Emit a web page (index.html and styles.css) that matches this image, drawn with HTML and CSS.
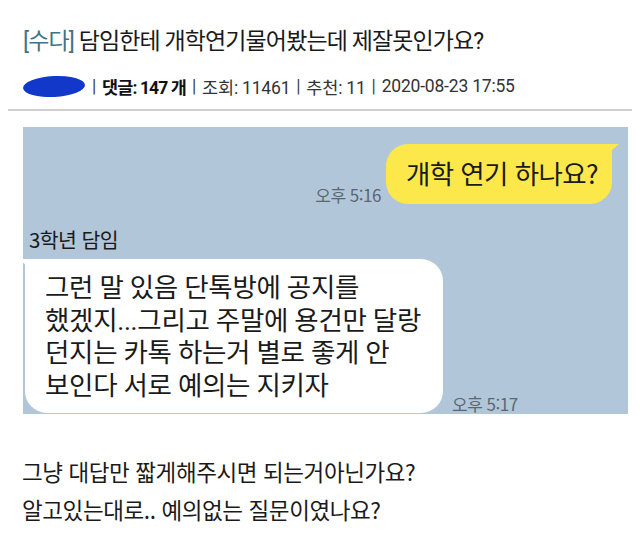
FILE: index.html
```html
<!DOCTYPE html>
<html lang="ko">
<head>
<meta charset="utf-8">
<link rel="stylesheet" href="styles.css">
</head>
<body>
<div class="page">
  <h1 class="title"><span class="tag">[수다]</span> 담임한테 개학연기물어봤는데 제잘못인가요?</h1>
  <div class="meta">
    <span class="blob"></span>
    <span class="sep">|</span>
    <span class="strong">댓글: 147 개</span>
    <span class="sep">|</span>
    <span>조회: 11461</span>
    <span class="sep">|</span>
    <span>추천: 11</span>
    <span class="sep">|</span>
    <span>2020-08-23 17:55</span>
  </div>
  <div class="divider"></div>
  <div class="chat">
    <div class="row-me">
      <span class="time">오후 5:16</span>
      <div class="bubble yellow">개학 연기 하나요?</div>
    </div>
    <div class="name">3학년 담임</div>
    <div class="row-them">
      <div class="bubble white">그런 말 있음 단톡방에 공지를<br>했겠지...그리고 주말에 용건만 달랑<br>던지는 카톡 하는거 별로 좋게 안<br>보인다 서로 예의는 지키자</div>
      <span class="time">오후 5:17</span>
    </div>
  </div>
  <div class="body-text">
    <p>그냥 대답만 짧게해주시면 되는거아닌가요?</p>
    <p>알고있는대로.. 예의없는 질문이였나요?</p>
  </div>
</div>
</body>
</html>
```

FILE: styles.css
```css
html, body {
  margin: 0;
  padding: 0;
  background: #ffffff;
}
.page {
  width: 640px;
  height: 551px;
  overflow: hidden;
  font-family: "Roboto", "Noto Sans CJK KR", sans-serif;
  color: #1c1c1c;
}
.title {
  margin: 0;
  padding: 25px 0 0 23px;
  font-size: 23px;
  font-weight: 400;
  line-height: 34px;
  letter-spacing: -0.9px;
  color: #1a1a1a;
}
.tag {
  color: #3f7487;
}
.meta {
  display: flex;
  align-items: center;
  gap: 6px;
  padding: 12px 0 0 23px;
  height: 30px;
  font-size: 17.5px;
  color: #333;
  letter-spacing: -0.2px;
}
.blob {
  width: 62px;
  height: 21px;
  border-radius: 50%;
  background: #1238c9;
  transform: rotate(-3deg);
  margin-right: 1px;
}
.sep {
  color: #444;
}
.strong {
  font-weight: 700;
  color: #111;
  letter-spacing: -0.9px;
}
.divider {
  margin: 8px 8px 0 8px;
  height: 2px;
  background: #cfcfcf;
}
.chat {
  margin: 16px 12px 0 23px;
  height: 287px;
  background: #b2c6d9;
  box-sizing: border-box;
  padding: 17px 16px 0 2px;
  font-family: "Noto Sans CJK KR", "Roboto", sans-serif;
}
.row-me {
  display: flex;
  justify-content: flex-end;
  align-items: flex-end;
  gap: 5px;
}
.time {
  font-size: 17px;
  color: #5b6672;
  line-height: 18px;
  letter-spacing: -0.5px;
}
.bubble {
  position: relative;
  font-size: 26.5px;
  color: #1a1a1a;
}
.yellow {
  background: #fde84c;
  border-radius: 22px 0 22px 22px;
  padding: 10px 14px 12px 20px;
  line-height: 38px;
  letter-spacing: -0.6px;
}
.yellow::after {
  content: "";
  position: absolute;
  right: -7px;
  top: 0;
  width: 16px;
  height: 14px;
  background: #fde84c;
  clip-path: polygon(0 0, 100% 0, 0 100%);
}
.name {
  margin: 22px 0 0 4px;
  font-size: 20.5px;
  line-height: 26px;
  color: #1a1a1a;
  letter-spacing: -0.6px;
}
.row-them {
  display: flex;
  align-items: flex-end;
  gap: 9px;
  margin-top: 7px;
}
.white {
  font-family: "Roboto", "Noto Sans CJK KR", sans-serif;
  background: #ffffff;
  border-radius: 0 22px 22px 22px;
  padding: 13px 22px 11px 20px;
  line-height: 32.5px;
  letter-spacing: -0.3px;
}
.white::before {
  content: "";
  position: absolute;
  left: -6px;
  top: 0;
  width: 16px;
  height: 14px;
  background: #ffffff;
  clip-path: polygon(0 0, 100% 0, 100% 100%);
}
.body-text {
  padding: 38px 0 0 22px;
  font-family: "Noto Sans CJK KR", "Roboto", sans-serif;
  font-size: 22.5px;
  color: #1a1a1a;
  letter-spacing: -0.4px;
}
.body-text p {
  margin: 0;
  line-height: 38px;
}
```
